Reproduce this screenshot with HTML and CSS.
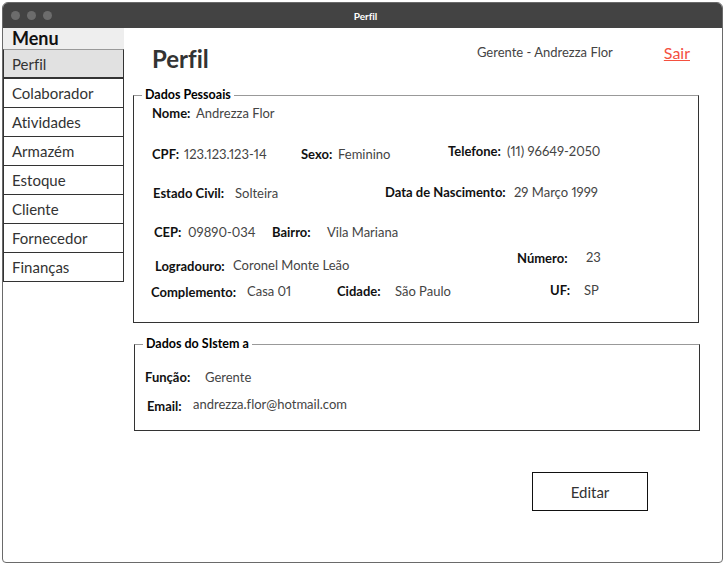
FILE: index.html
```html
<!DOCTYPE html>
<html lang="pt">
<head>
<meta charset="utf-8">
<title>Perfil</title>
<link rel="stylesheet" href="styles.css">
</head>
<body>
<div class="window">
  <div class="titlebar">
    <div class="dots"><span class="dot"></span><span class="dot"></span><span class="dot"></span></div>
    <div class="wtitle">Perfil</div>
    <div></div>
  </div>
  <div class="body">
    <nav class="sidebar">
      <div class="menu-head">Menu</div>
      <div class="item active">Perfil</div>
      <div class="item">Colaborador</div>
      <div class="item">Atividades</div>
      <div class="item">Armazém</div>
      <div class="item">Estoque</div>
      <div class="item">Cliente</div>
      <div class="item">Fornecedor</div>
      <div class="item">Finanças</div>
    </nav>
    <main class="main">
      <header class="top">
        <h1 class="title">Perfil</h1>
        <span class="user">Gerente - Andrezza Flor</span>
        <a class="logout" href="#">Sair</a>
      </header>

      <fieldset class="box box1">
        <legend>Dados Pessoais</legend>
        <div class="row r1">
          <b>Nome:</b><span>Andrezza Flor</span>
        </div>
        <div class="row r2">
          <b>CPF:</b><span>123.123.123-14</span>
          <b>Sexo:</b><span>Feminino</span>
          <b class="up3">Telefone:</b><span class="up3">(11) 96649-2050</span>
        </div>
        <div class="row r3">
          <b>Estado Civil:</b><span>Solteira</span>
          <b class="up1">Data de Nascimento:</b><span class="up1">29 Março 1999</span>
        </div>
        <div class="row r4">
          <b>CEP:</b><span>09890-034</span>
          <b>Bairro:</b><span>Vila Mariana</span>
        </div>
        <div class="row r5">
          <b>Logradouro:</b><span class="up1">Coronel Monte Leão</span>
          <b class="up8">Número:</b><span class="up9">23</span>
        </div>
        <div class="row r6">
          <b>Complemento:</b><span class="up1">Casa 01</span>
          <b class="up1">Cidade:</b><span class="up1">São Paulo</span>
          <b class="up2">UF:</b><span class="up2">SP</span>
        </div>
      </fieldset>

      <fieldset class="box box2">
        <legend>Dados do SIstem a</legend>
        <div class="row r7">
          <b>Função:</b><span>Gerente</span>
        </div>
        <div class="row r8">
          <b>Email:</b><span class="up2">andrezza.flor@hotmail.com</span>
        </div>
      </fieldset>

      <div class="actions">
        <button class="btn" type="button">Editar</button>
      </div>
    </main>
  </div>
</div>
</body>
</html>
```

FILE: styles.css
```css
* { box-sizing: border-box; }

html, body {
  margin: 0;
  padding: 0;
  background: #ffffff;
  font-family: Lato, "Open Sans", sans-serif;
  font-variant-ligatures: none;
  font-variant-numeric: proportional-nums;
  color: #333;
}

.window {
  width: 721px;
  height: 561px;
  margin: 2px 0 0 2px;
  border: 1px solid #6a6a6a;
  border-radius: 6px 6px 4px 4px;
  overflow: hidden;
  display: flex;
  flex-direction: column;
  background: #fff;
}

.titlebar {
  height: 25px;
  flex: none;
  background: #434343;
  display: grid;
  grid-template-columns: 1fr auto 1fr;
  align-items: center;
}

.dots {
  display: flex;
  gap: 7px;
  padding-left: 8px;
}

.dot {
  width: 9px;
  height: 9px;
  border-radius: 50%;
  background: #6c6c6c;
}

.wtitle {
  color: #fff;
  font-size: 10px;
  font-weight: 700;
  padding-left: 6px;
}

.body {
  flex: 1;
  display: flex;
}

.sidebar {
  width: 121px;
  flex: none;
}

.menu-head {
  height: 22px;
  background: #eeeeee;
  font-size: 18px;
  font-weight: 700;
  color: #111;
  line-height: 21px;
  padding-left: 9px;
}

.item {
  height: 30px;
  margin-top: -1px;
  border: 1px solid #333;
  font-size: 15px;
  line-height: 28px;
  padding-left: 8px;
  color: #333;
  background: #fff;
}

.item:first-of-type { margin-top: 0; }

.item.active {
  background: #e1e1e1;
  border-top-color: #999;
  border-bottom: 2px solid #333;
  height: 30px;
}

.main {
  flex: 1;
  padding-left: 9px;
}

.top {
  display: flex;
  align-items: flex-start;
  height: 60px;
  padding-left: 19px;
}

.title {
  margin: 17px 0 0 0;
  font-size: 24px;
  font-weight: 700;
  color: #333;
  line-height: 28px;
}

.user {
  margin: 15px 0 0 auto;
  font-size: 13px;
  color: #444;
  line-height: 18px;
}

.logout {
  margin: 15px 32px 0 51px;
  font-size: 16px;
  color: #f4503f;
  line-height: 20px;
}

.box {
  margin: 0;
  padding: 0;
  width: 566px;
  border: 1px solid #333;
  border-top-color: #999;
  min-inline-size: 0;
}

.box legend {
  margin-left: 8px;
  padding: 0 3px;
  font-size: 12.5px;
  font-weight: 700;
  color: #000;
  line-height: 14px;
}

.box1 { height: 235px; }

.box2 {
  margin: 14px 0 0 1px;
  height: 94px;
}

.row {
  display: grid;
  align-items: start;
  font-size: 13px;
  line-height: 16px;
  color: #444;
}

.row b {
  font-weight: 700;
  color: #111;
}

.up1 { margin-top: -1px; }
.up2 { margin-top: -2px; }
.up3 { margin-top: -3px; }
.up8 { margin-top: -8px; }
.up9 { margin-top: -9px; }

.r1 { margin-top: 3px; padding-left: 18px; grid-template-columns: 44px auto; }
.r2 { margin-top: 25px; padding-left: 18px; grid-template-columns: 32px 117px 37px 110px 59px auto; }
.r3 { margin-top: 23px; padding-left: 19px; grid-template-columns: 82px 150px 129px auto; }
.r4 { margin-top: 23px; padding-left: 20px; grid-template-columns: 34px 84px 55px auto; }
.r5 { margin-top: 18px; padding-left: 21px; grid-template-columns: 78px 284px 69px auto; }
.r6 { margin-top: 10px; padding-left: 17px; grid-template-columns: 96px 90px 58px 155px 34px auto; }

.r7 { margin-top: 18px; padding-left: 10px; grid-template-columns: 60px auto; }
.r8 { margin-top: 13px; padding-left: 12px; grid-template-columns: 46px auto; }

.actions {
  padding: 41px 0 0 399px;
}

.btn {
  width: 116px;
  height: 39px;
  border: 1px solid #111;
  background: #fff;
  font-family: Lato, "Open Sans", sans-serif;
  font-size: 15px;
  color: #333;
  padding: 0;
}
```
